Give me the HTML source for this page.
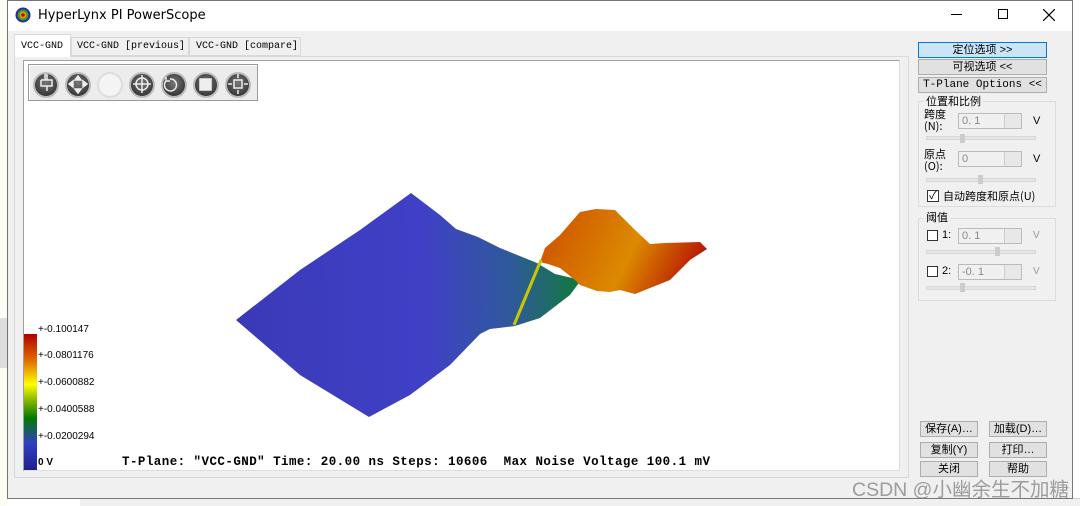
<!DOCTYPE html>
<html><head><meta charset="utf-8"><style>
*{margin:0;padding:0;box-sizing:border-box}
body{width:1080px;height:506px;overflow:hidden;background:#fff;position:relative;font-family:"Liberation Sans","Noto Sans CJK SC",sans-serif;}
.a{position:absolute}
.win{left:7px;top:0;width:1066px;height:499px;border:1px solid #777;background:#f0f0f0}
.title{left:8px;top:1px;width:1064px;height:30px;background:#fff}
.mono{font-family:"Liberation Mono","Noto Sans CJK SC",monospace;white-space:nowrap}
.btn{position:absolute;background:#e1e1e1;border:1px solid #adadad;font-size:11px;text-align:center;line-height:14px;color:#000;font-family:"Liberation Sans","Noto Sans CJK SC",sans-serif}
.grp{position:absolute;border:1px solid #dcdcdc}
.lbl{position:absolute;font-size:11px;background:#f0f0f0;padding:0 2px;font-family:"Noto Sans CJK SC",sans-serif}
.spin{position:absolute;width:64px;height:16px;border:1px solid #bbb;background:#f0f0f0;font-size:11px;color:#888;padding-left:3px;line-height:14px}
.spin:after{content:"";position:absolute;right:0;top:0;width:16px;height:14px;border-left:1px solid #ccc;background:#e8e8e8}
.trk{position:absolute;height:4px;background:#e6e6e6;border:1px solid #d6d6d6}
.thm{position:absolute;width:5px;height:9px;background:#ccc}
.icn{position:absolute;top:72px;width:26px;height:26px;border-radius:50%;background:radial-gradient(circle at 50% 40%,#777,#222);border:2px solid #bbb}
.tk{position:absolute;left:38px;font-size:10px;color:#000}
</style></head><body>
<div class="a" style="left:0;top:0;width:7px;height:506px;background:#fdfdf6"></div>
<div class="a" style="left:0;top:318px;width:7px;height:50px;background:#ddd"></div>
<div class="a" style="left:80px;top:498px;width:1000px;height:8px;background:#f0f0f0;border-top:1px solid #ccc"></div>
<div class="a win"></div>
<div class="a title"></div>
<svg class="a" style="left:15px;top:7px" width="16" height="16"><circle cx="8" cy="8" r="7.5" fill="#2a2a9a"/><circle cx="8" cy="8" r="5.5" fill="#3a9a2a"/><circle cx="8" cy="8" r="3.5" fill="#e0a000"/><circle cx="8" cy="8" r="1.8" fill="#c00"/></svg>
<div class="a" style="left:38px;top:8px;font-size:13px;font-family:'DejaVu Sans',sans-serif">HyperLynx PI PowerScope</div>
<div class="a" style="left:951px;top:14px;width:11px;height:1px;background:#000"></div>
<div class="a" style="left:998px;top:9px;width:10px;height:10px;border:1px solid #000"></div>
<svg class="a" style="left:1043px;top:9px" width="12" height="12"><path d="M0 0L12 12M12 0L0 12" stroke="#000" stroke-width="1.2"/></svg>
<!-- tabs -->
<div class="a" style="left:14px;top:56px;width:895px;height:422px;background:#f0f0f0;border:1px solid #d9d9d9"></div>
<div class="a mono" style="left:14px;top:34px;width:57px;height:23px;background:#fff;border:1px solid #d9d9d9;border-bottom:none;font-size:10px;padding:6px 0 0 6px">VCC-GND</div>
<div class="a mono" style="left:71px;top:37px;width:118px;height:19px;border:1px solid #d9d9d9;font-size:10px;padding:3px 0 0 5px;overflow:hidden">VCC-GND [previous]</div>
<div class="a mono" style="left:189px;top:37px;width:112px;height:19px;border:1px solid #d9d9d9;font-size:10px;padding:3px 0 0 6px;overflow:hidden">VCC-GND [compare]</div>
<div class="a" style="left:23px;top:60px;width:877px;height:411px;border:1px solid #a0a0a0;border-right-color:#ddd;border-bottom-color:#ddd;background:#fff"></div>
<!-- toolbar -->
<div class="a" style="left:28px;top:64px;width:230px;height:37px;background:#ececec;border:1px solid #999;box-shadow:inset 1px 1px #fff"></div>
<div class="icn" style="left:33px"></div><div class="icn" style="left:65px"></div>
<div class="icn" style="left:97px;background:#f4f4f4;border-color:#ddd"></div>
<div class="icn" style="left:129px"></div><div class="icn" style="left:161px"></div><div class="icn" style="left:193px"></div><div class="icn" style="left:225px"></div>
<svg class="a" style="left:28px;top:64px" width="230" height="37" fill="none" stroke="#eee" stroke-width="1.5">
<path d="M13 16h6v-5h-2v5m2 0h5v6h-5v5m-6-11v6h6"/>
<path d="M50 12l-3 4h6zM50 29l-3-4h6zM41 20l4-3v6zM59 20l-4-3v6z" fill="#eee"/>
<circle cx="114" cy="20" r="6"/><path d="M114 11v18M105 20h18"/>
<path d="M142 15a6 6 0 1 1-4 2M138 13v4h4"/>
<rect x="172" y="15" width="11" height="11" fill="#eee"/>
<rect x="206" y="16" width="8" height="8"/><path d="M210 10v4M210 26v4M200 20h4M216 20h4"/>
</svg>
<!-- surface -->
<svg class="a" style="left:0;top:0" width="900" height="470">
<defs>
<linearGradient id="bg" x1="236" y1="300" x2="581" y2="290" gradientUnits="userSpaceOnUse">
<stop offset="0" stop-color="#3a3ab8"/><stop offset=".55" stop-color="#3f40c6"/><stop offset=".8" stop-color="#2f5a9a"/><stop offset="1" stop-color="#107a3a"/></linearGradient>
<linearGradient id="og" x1="560" y1="220" x2="700" y2="290" gradientUnits="userSpaceOnUse">
<stop offset="0" stop-color="#d05a00"/><stop offset=".5" stop-color="#dc8a00"/><stop offset="1" stop-color="#b00000"/></linearGradient>
</defs>
<path d="M411 193L440 215L456 229L478 237L500 248L537 263L555 274L581 280L570 295L540 318L515 326L490 329L480 334L450 365L410 395L369 417L300 375L236 320L300 270L360 230Z" fill="url(#bg)"/>
<path d="M540 262L545 248L560 235L580 212L596 209L615 210L635 230L650 244L665 243L700 242L707 249L690 260L670 280L650 288L635 294L620 290L610 292L597 291L580 285L575 280L560 268L548 264Z" fill="url(#og)"/>
<path d="M541 260L514 325" stroke="#c8c800" stroke-width="3"/>
</svg>
<!-- legend -->
<div class="a" style="left:24px;top:334px;width:13px;height:136px;background:linear-gradient(#b00000,#e07000 20%,#ffff00 37%,#7ab000 50%,#007a00 62%,#3040c0 80%,#20208a)"></div>
<div class="tk" style="top:324px">+-0.100147</div>
<div class="tk" style="top:350px">+-0.0801176</div>
<div class="tk" style="top:377px">+-0.0600882</div>
<div class="tk" style="top:404px">+-0.0400588</div>
<div class="tk" style="top:431px">+-0.0200294</div>
<div class="tk" style="top:457px;font-weight:bold">0 V</div>
<div class="a mono" style="left:122px;top:455px;font-size:12.5px;letter-spacing:0.45px;font-weight:bold;white-space:pre;font-family:'Liberation Mono',monospace">T-Plane: "VCC-GND" Time: 20.00 ns Steps: 10606  Max Noise Voltage 100.1 mV</div>
<!-- right panel -->
<div class="btn" style="left:918px;top:42px;width:129px;height:16px;background:#cce4f7;border-color:#0078d7">定位选项 &gt;&gt;</div>
<div class="btn" style="left:918px;top:59px;width:129px;height:16px">可视选项 &lt;&lt;</div>
<div class="btn mono" style="left:918px;top:77px;width:129px;height:16px;font-family:'Liberation Mono',monospace">T-Plane Options &lt;&lt;</div>
<div class="grp" style="left:918px;top:101px;width:138px;height:106px"></div>
<div class="lbl" style="left:924px;top:93px">位置和比例</div>
<div class="a" style="left:924px;top:108px;font-size:11px;line-height:12px;font-family:'Noto Sans CJK SC',sans-serif">跨度<br>(N):</div>
<div class="spin" style="left:958px;top:113px">0. 1</div>
<div class="a" style="left:1033px;top:115px;font-size:11px">V</div>
<div class="trk" style="left:926px;top:136px;width:110px"></div><div class="thm" style="left:960px;top:134px"></div>
<div class="a" style="left:924px;top:148px;font-size:11px;line-height:12px;font-family:'Noto Sans CJK SC',sans-serif">原点<br>(O):</div>
<div class="spin" style="left:958px;top:151px">0</div>
<div class="a" style="left:1033px;top:153px;font-size:11px">V</div>
<div class="trk" style="left:926px;top:178px;width:110px"></div><div class="thm" style="left:978px;top:175px"></div>
<div class="a" style="left:927px;top:190px;width:12px;height:12px;border:1px solid #333;background:#fff;font-size:11px;line-height:10px;text-align:center">✓</div>
<div class="a" style="left:943px;top:188px;font-size:11px;font-family:'Noto Sans CJK SC',sans-serif">自动跨度和原点(U)</div>
<div class="grp" style="left:918px;top:218px;width:138px;height:83px"></div>
<div class="lbl" style="left:924px;top:209px">阈值</div>
<div class="a" style="left:927px;top:230px;width:11px;height:11px;border:1px solid #333;background:#fff"></div>
<div class="a" style="left:942px;top:229px;font-size:11px">1:</div>
<div class="spin" style="left:958px;top:228px">0. 1</div>
<div class="a" style="left:1033px;top:230px;font-size:10px;color:#999">V</div>
<div class="trk" style="left:926px;top:250px;width:110px"></div><div class="thm" style="left:995px;top:247px"></div>
<div class="a" style="left:927px;top:266px;width:11px;height:11px;border:1px solid #333;background:#fff"></div>
<div class="a" style="left:942px;top:265px;font-size:11px">2:</div>
<div class="spin" style="left:958px;top:264px">-0. 1</div>
<div class="a" style="left:1033px;top:266px;font-size:10px;color:#999">V</div>
<div class="trk" style="left:926px;top:286px;width:110px"></div><div class="thm" style="left:960px;top:283px"></div>
<div class="btn" style="left:920px;top:421px;width:58px;height:16px">保存(A)…</div>
<div class="btn" style="left:989px;top:421px;width:58px;height:16px">加载(D)…</div>
<div class="btn" style="left:920px;top:442px;width:58px;height:16px">复制(Y)</div>
<div class="btn" style="left:989px;top:442px;width:58px;height:16px">打印…</div>
<div class="btn" style="left:920px;top:461px;width:58px;height:16px">关闭</div>
<div class="btn" style="left:989px;top:461px;width:58px;height:16px">帮助</div>
<div class="a" style="left:852px;top:473px;font-size:19.5px;color:rgba(120,120,120,.7);font-family:'Liberation Sans','Noto Sans CJK SC',sans-serif;white-space:nowrap">CSDN @小幽余生不加糖</div>
</body></html>
